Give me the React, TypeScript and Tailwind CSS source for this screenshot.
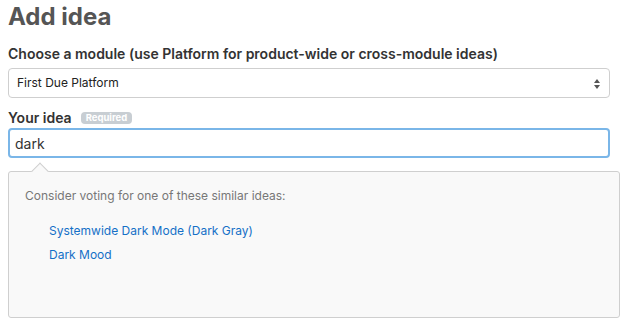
import React from "react";

const SimilarIdeas = ({ ideas }: { ideas: string[] }) => {
  return (
    <div className="relative mt-[13px] h-[147px] rounded-[3px] border border-[#cfcfcf] bg-[#f9f9f9] px-4 pt-[15px]">
      {/* little pointer up to the input */}
      <div className="absolute -top-[7px] left-[25px] h-[12px] w-[12px] rotate-45 border-l border-t border-[#cfcfcf] bg-[#f9f9f9]" />
      <p className="text-[12px] leading-[18px] text-[#777]">
        Consider voting for one of these similar ideas:
      </p>
      <ul className="mt-[17px] flex flex-col gap-[6px] pl-6">
        {ideas.map((idea) => (
          <li key={idea} className="text-[12px] leading-[18px]">
            <a href="#" className="text-[#1570c7]">
              {idea}
            </a>
          </li>
        ))}
      </ul>
    </div>
  );
};

export default function App() {
  const [idea, setIdea] = React.useState("dark");

  return (
    <div
      className="h-[328px] w-[628px] overflow-hidden bg-white px-2 text-[#333]"
      style={{ fontFamily: "Inter, 'Noto Sans', sans-serif" }}
    >
      <h1 className="pt-[2px] text-[24px] leading-[30px] font-bold text-[#555]">
        Add idea
      </h1>

      <label className="mt-[13px] block text-[14px] leading-[18px] font-semibold text-[#333]">
        Choose a module (use Platform for product-wide or cross-module ideas)
      </label>
      <div className="relative mt-[5px] flex h-[30px] w-[602px] items-center rounded-[4px] border border-[#cfcfcf] bg-white pl-2 text-[12px] text-[#222]">
        First Due Platform
        <svg
          className="absolute top-[10px] right-[9px]"
          width="6"
          height="10"
          viewBox="0 0 6 10"
        >
          <path d="M0 4 L3 0 L6 4 Z" fill="#555" />
          <path d="M0 6 L3 10 L6 6 Z" fill="#555" />
        </svg>
      </div>

      <div className="mt-[11px] flex items-center gap-[9px]">
        <span className="text-[14px] leading-[18px] font-semibold text-[#333]">Your idea</span>
        <span className="rounded-[4px] bg-[#c8ced3] px-[5px] text-[9.5px] leading-[12px] font-bold text-white">
          Required
        </span>
      </div>
      <input
        value={idea}
        onChange={(e) => setIdea(e.target.value)}
        className="mt-[1px] block h-[30px] w-[602px] rounded-[4px] border-2 border-[#7ab6e8] bg-white px-[5px] text-[14px] text-[#333] outline-none"
      />

      <SimilarIdeas ideas={["Systemwide Dark Mode (Dark Gray)", "Dark Mood"]} />
    </div>
  );
}
